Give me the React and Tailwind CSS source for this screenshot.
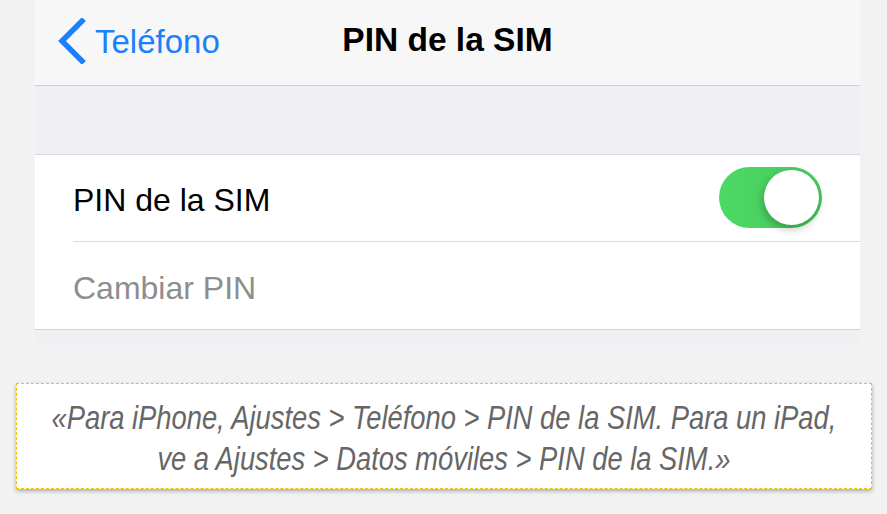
export default function App() {
  return (
    <div className="w-[887px] h-[514px] bg-[#f2f2f2] font-['Liberation_Sans',Arial,sans-serif] overflow-hidden">
      <div className="ml-[35px] w-[825px]">
        {/* nav bar */}
        <div className="relative h-[86px] bg-[#f7f7f7] border-b border-[#cfcfd3] flex items-center justify-center">
          <div className="absolute left-[21px] top-0 h-full flex items-center text-[#1a80fb]">
            <svg width="30" height="46" viewBox="0 0 30 46" className="mt-[-4px]">
              <polyline points="26,3 6,23 26,43" fill="none" stroke="#1a80fb" strokeWidth="5.5" strokeLinecap="square" />
            </svg>
            <span className="ml-[9px] text-[33px] leading-none mt-[-3px]">Teléfono</span>
          </div>
          <span className="text-[33.5px] font-bold text-black leading-none mt-[-6px]">PIN de la SIM</span>
        </div>

        {/* spacer */}
        <div className="h-[69px] bg-[#efeff4] border-b border-[#d8d8dc]"></div>

        {/* list */}
        <div className="bg-white pl-[38px]">
          <div className="h-[87px] flex items-center justify-between pr-[38px] border-b border-[#dcdcdf]">
            <span className="text-[32px] text-black leading-none mt-[4px]">PIN de la SIM</span>
            <div className="relative w-[103px] h-[61px] rounded-full bg-gradient-to-r from-[#4cd964] to-[#47c95c] mt-[-2px]">
              <div className="absolute right-[3px] top-[3px] w-[55px] h-[55px] rounded-full bg-white shadow-[-1px_4px_8px_rgba(0,0,0,0.25)]"></div>
            </div>
          </div>
          <div className="h-[87px] flex items-center">
            <span className="text-[32px] text-[#8e8e8e] leading-none mt-[4px]">Cambiar PIN</span>
          </div>
        </div>
        <div className="h-[14px] bg-[#efeff4] border-t border-[#d4d4d8]"></div>
      </div>

      {/* quote */}
      <div className="mt-[40px] ml-[16px] w-[856px] h-[106px] bg-white border border-dashed border-[#f4c000] shadow-[0_2px_4px_rgba(0,0,0,0.3)] flex items-center justify-center">
        <p className="inline-block whitespace-nowrap scale-x-[0.828] text-center italic text-[#666666] text-[33px] leading-[41px] mt-[4px]">
          «Para iPhone, Ajustes &gt; Teléfono &gt; PIN de la SIM. Para un iPad,
          <br />
          ve a Ajustes &gt; Datos móviles &gt; PIN de la SIM.»
        </p>
      </div>
    </div>
  );
}
